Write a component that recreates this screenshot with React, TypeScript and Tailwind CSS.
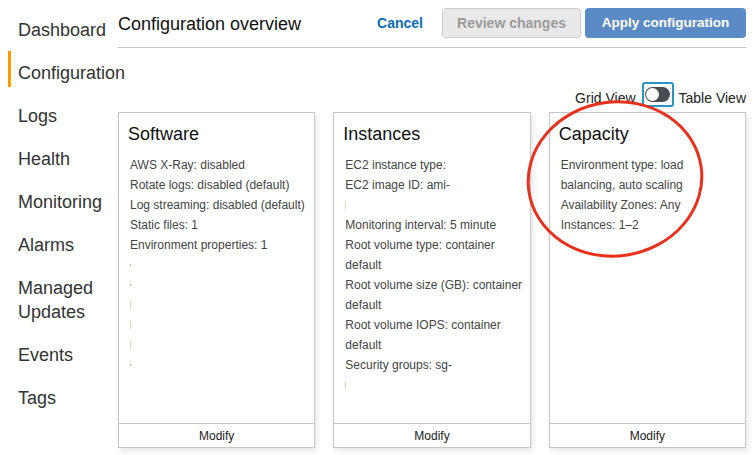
import React from "react";

const nav = ["Dashboard", "Configuration", "Logs", "Health", "Monitoring", "Alarms", "Managed\nUpdates", "Events", "Tags"];

type Line = { t?: string; mark?: "line" | "dot" };

const Mark = ({ kind }: { kind: "line" | "dot" }) => (
  <div className="h-[20px] flex items-center">
    {kind === "line" ? (
      <span className="inline-block w-px h-[8px] bg-[#f1d2a4]" />
    ) : (
      <span className="inline-block w-px h-[2px] bg-[#c9a77a]" />
    )}
  </div>
);

function Card({ title, lines }: { title: string; lines: Line[] }) {
  return (
    <div className="flex flex-col border border-[#c6c6c6] bg-white shadow-[2px_3px_6px_rgba(0,0,0,0.10)]">
      <div className="flex-1 px-[9px] pt-[9px]">
        <div className="text-[18px] leading-[24px] text-[#111]">{title}</div>
        <div className="mt-[9px] pl-[2px] text-[12px] leading-[20px] text-[#444]">
          {lines.map((l, i) =>
            l.mark ? <Mark key={i} kind={l.mark} /> : <div key={i} className="whitespace-nowrap">{l.t}</div>
          )}
        </div>
      </div>
      <div className="h-[24px] border-t border-[#c6c6c6] text-center text-[12px] leading-[24px] text-[#222]">Modify</div>
    </div>
  );
}

export default function App() {
  return (
    <div className="relative flex w-[756px] h-[455px] overflow-hidden bg-white text-[#333] font-['Liberation_Sans',Arial,sans-serif]">
      <div className="w-[118px] shrink-0 pt-[8px]">
        {nav.map((n) => (
          <div key={n} className="relative pl-[18px] py-[9.5px] text-[18px] leading-[24px] whitespace-pre text-[#333]">
            {n === "Configuration" && <span className="absolute left-2 top-0 w-[3px] h-[36px] bg-[#ff9900]" />}
            {n}
          </div>
        ))}
      </div>
      <div className="w-[628px] flex flex-col">
        <div className="flex items-center justify-between pt-2 pb-[9px] border-b border-[#c8c8c8]">
          <div className="pt-[1px] text-[18px] leading-[24px] text-[#111]">Configuration overview</div>
          <div className="flex items-center">
            <span className="mr-[19px] text-[14px] font-bold text-[#0b6db3]">Cancel</span>
            <div className="flex h-[30px] w-[139px] items-center justify-center rounded-[4px] border border-[#cbcbcb] bg-[#e9e9e9] text-[14px] font-bold text-[#9b9b9b]">
              Review changes
            </div>
            <div className="ml-[4px] flex h-[30px] w-[161px] items-center justify-center rounded-[4px] bg-[#5b8bc7] text-[13.5px] font-bold text-white">
              Apply configuration
            </div>
          </div>
        </div>
        <div className="mt-[34px] flex h-[25px] items-end justify-end">
          <span className="mb-[1px] text-[14px] leading-[16px] text-[#222]">Grid View</span>
          <div className="ml-[6px] flex h-[25px] w-[32px] items-center justify-center rounded-[3px] border-2 border-[#2a93c1]">
            <div className="relative h-[15px] w-[25px] rounded-full bg-[#474c53]">
              <span className="absolute left-[1px] top-[1px] h-[13px] w-[13px] rounded-full bg-white" />
            </div>
          </div>
          <span className="ml-[5px] mb-[1px] text-[14px] leading-[16px] text-[#222]">Table View</span>
        </div>
        <div className="mt-[5px] grid h-[336px] grid-cols-3 gap-[18px]">
          <Card
            title="Software"
            lines={[
              { t: "AWS X-Ray: disabled" },
              { t: "Rotate logs: disabled (default)" },
              { t: "Log streaming: disabled (default)" },
              { t: "Static files: 1" },
              { t: "Environment properties: 1" },
              { mark: "dot" },
              { mark: "dot" },
              { mark: "line" },
              { mark: "line" },
              { mark: "line" },
              { mark: "dot" },
            ]}
          />
          <Card
            title="Instances"
            lines={[
              { t: "EC2 instance type:" },
              { t: "EC2 image ID: ami-" },
              { mark: "line" },
              { t: "Monitoring interval: 5 minute" },
              { t: "Root volume type: container" },
              { t: "default" },
              { t: "Root volume size (GB): container" },
              { t: "default" },
              { t: "Root volume IOPS: container" },
              { t: "default" },
              { t: "Security groups: sg-" },
              { mark: "line" },
            ]}
          />
          <Card
            title="Capacity"
            lines={[
              { t: "Environment type: load" },
              { t: "balancing, auto scaling" },
              { t: "Availability Zones: Any" },
              { t: "Instances: 1–2" },
            ]}
          />
        </div>
      </div>
      <svg className="pointer-events-none absolute left-0 top-0" width="756" height="455">
        <ellipse cx="615" cy="179" rx="87" ry="77" fill="none" stroke="#e8301c" strokeWidth="3" transform="rotate(-8 615 179)" />
      </svg>
    </div>
  );
}
